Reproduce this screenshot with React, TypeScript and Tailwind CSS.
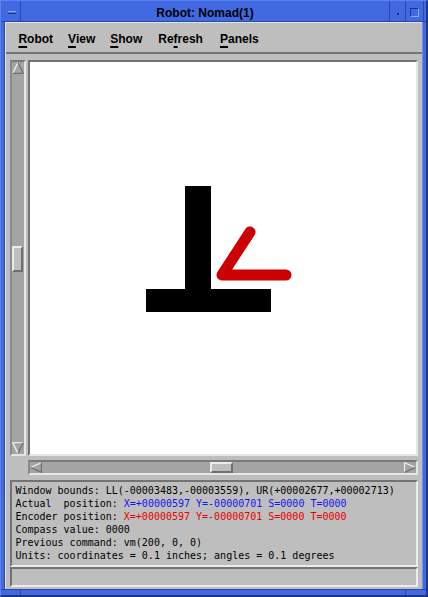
import React from "react";

const BG = "bg-[#bebebe]";

function UpArrow() {
  return (
    <svg width="12" height="12" viewBox="0 0 12 12" className="block">
      <polygon points="6,1 0.5,11.5 11.5,11.5" fill="#a4a4a4" />
      <line x1="6" y1="0.5" x2="0.7" y2="11.3" stroke="#ececec" strokeWidth="1.4" />
      <line x1="6" y1="0.5" x2="11.3" y2="11.3" stroke="#6e6e6e" strokeWidth="1.2" />
      <line x1="0.5" y1="11.4" x2="11.5" y2="11.4" stroke="#6e6e6e" strokeWidth="1.2" />
    </svg>
  );
}
function DownArrow() {
  return (
    <svg width="12" height="12" viewBox="0 0 12 12" className="block">
      <polygon points="0.5,0.5 11.5,0.5 6,11" fill="#a4a4a4" />
      <line x1="0.5" y1="0.6" x2="11.5" y2="0.6" stroke="#ececec" strokeWidth="1.2" />
      <line x1="0.7" y1="0.6" x2="6" y2="11.5" stroke="#ececec" strokeWidth="1.4" />
      <line x1="11.3" y1="0.6" x2="6" y2="11.5" stroke="#6e6e6e" strokeWidth="1.2" />
    </svg>
  );
}
function LeftArrow() {
  return (
    <svg width="12" height="11" viewBox="0 0 12 11" className="block">
      <polygon points="0.5,5.5 11.5,0.5 11.5,10.5" fill="#a4a4a4" />
      <line x1="0.5" y1="5.5" x2="11.5" y2="0.6" stroke="#ececec" strokeWidth="1.3" />
      <line x1="0.5" y1="5.5" x2="11.5" y2="10.4" stroke="#6e6e6e" strokeWidth="1.2" />
      <line x1="11.4" y1="0.5" x2="11.4" y2="10.5" stroke="#6e6e6e" strokeWidth="1.2" />
    </svg>
  );
}
function RightArrow() {
  return (
    <svg width="12" height="11" viewBox="0 0 12 11" className="block">
      <polygon points="0.5,0.5 11.5,5.5 0.5,10.5" fill="#a4a4a4" />
      <line x1="0.6" y1="0.5" x2="0.6" y2="10.5" stroke="#ececec" strokeWidth="1.2" />
      <line x1="0.5" y1="0.6" x2="11.5" y2="5.5" stroke="#ececec" strokeWidth="1.3" />
      <line x1="0.5" y1="10.4" x2="11.5" y2="5.5" stroke="#6e6e6e" strokeWidth="1.2" />
    </svg>
  );
}

function MenuItem({ first, rest, pre, cls }: { first: string; rest: string; pre?: string; cls?: string }) {
  return (
    <span className={`whitespace-pre ${cls ?? ""}`}>
      {pre}
      <span className="underline decoration-2 underline-offset-[3px]">{first}</span>
      {rest}
    </span>
  );
}

export default function App() {
  const mono = { fontFamily: '"DejaVu Sans Mono", "Liberation Mono", monospace' };
  return (
    <div
      className="w-[428px] h-[597px] bg-[#4169e1] border-t border-l border-t-[#5f82f0] border-l-[#5f82f0] border-r-2 border-b-2 border-r-[#22367e] border-b-[#22367e] flex flex-col overflow-hidden"
      style={{ fontFamily: '"Liberation Sans", Arial, sans-serif' }}
    >
      {/* Title bar */}
      <div className="h-[21px] flex border-b border-b-[#2b47a8]">
        <div className="w-[20px] border-r border-r-[#2b47a8] flex items-center justify-end pr-[4px] pt-[2px]">
          <div className="w-[8px] h-[3px] border-t border-t-[#8ea6ff] border-b border-b-[#1f3480] bg-[#4a72ea]" />
        </div>
        <div className="flex-1 flex items-center justify-center text-[12px] font-bold text-black pt-[3px]">
          Robot: Nomad(1)
        </div>
        <div className="w-[16px] border-l border-l-[#2b47a8] flex items-center justify-center pt-[5px]">
          <div className="w-[2px] h-[2px] bg-[#1f3480]" />
        </div>
        <div className="w-[18px] border-l border-l-[#2b47a8] flex items-center justify-center pt-[2px]">
          <div className="w-[9px] h-[9px] border border-t-[#1f3480] border-l-[#1f3480] border-r-[#8ea6ff] border-b-[#8ea6ff]" />
        </div>
        <div className="w-[3px] border-l border-l-[#2b47a8]" />
      </div>

      {/* Middle */}
      <div className="flex h-[567px]">
        <div className="w-[5px] border-r border-r-[#2b47a8]" />
        <div className={`flex-1 ${BG} border-t border-l border-t-[#e4e4e4] border-l-[#e4e4e4] flex flex-col`}>
          {/* menu bar */}
          <div className="h-[31px] border-b-2 border-b-[#737373] flex items-center gap-[15px] pl-[12px] text-[12px] font-bold text-black pt-[3px]">
            <MenuItem first="R" rest="obot" />
            <MenuItem first="V" rest="iew" />
            <MenuItem first="S" rest="how" />
            <MenuItem pre="Re" first="f" rest="resh" cls="ml-[1px]" />
            <MenuItem first="P" rest="anels" cls="ml-[2px]" />
          </div>

          <div className="flex flex-col pt-[6px] px-[4px]">
            <div className="flex gap-[2px] h-[396px]">
              {/* vertical scrollbar */}
              <div className="w-[16px] h-full bg-[#a4a4a4] border-2 border-t-[#7a7a7a] border-l-[#8a8a8a] border-r-[#e6e6e6] border-b-[#e6e6e6] flex flex-col">
                <UpArrow />
                <div className="flex-1 pt-[172px]">
                  <div className={`w-[11px] h-[26px] ${BG} border-2 border-t-[#ececec] border-l-[#ececec] border-r-[#6e6e6e] border-b-[#6e6e6e]`} />
                </div>
                <DownArrow />
              </div>
              {/* canvas */}
              <div className="flex-1 bg-white border-2 border-t-[#737373] border-l-[#737373] border-r-[#e6e6e6] border-b-[#e6e6e6]">
                <svg width="386" height="392" viewBox="0 0 386 392" className="block">
                  <rect x="155" y="124" width="26" height="104" fill="#000" />
                  <rect x="116" y="227" width="125" height="23" fill="#000" />
                  <polyline
                    points="220,170 192,213 256,213"
                    fill="none"
                    stroke="#cc0000"
                    strokeWidth="11"
                    strokeLinecap="round"
                    strokeLinejoin="round"
                  />
                </svg>
              </div>
            </div>

            {/* horizontal scrollbar */}
            <div className="mt-[4px] ml-[18px] h-[15px] bg-[#a4a4a4] border-2 border-t-[#7a7a7a] border-l-[#8a8a8a] border-r-[#e6e6e6] border-b-[#e6e6e6] flex items-center">
              <LeftArrow />
              <div className="flex-1 pl-[168px] flex items-center">
                <div className={`w-[23px] h-[11px] ${BG} border-2 border-t-[#ececec] border-l-[#ececec] border-r-[#6e6e6e] border-b-[#6e6e6e]`} />
              </div>
              <RightArrow />
            </div>

            {/* info panel */}
            <div
              className="mt-[5px] h-[87px] border-2 border-t-[#737373] border-l-[#737373] border-r-[#ececec] border-b-[#ececec] pl-[3px] pt-[2px] text-[10px] leading-[13px] text-black"
              style={mono}
            >
              <div className="whitespace-pre">Window bounds: LL(-00003483,-00003559), UR(+00002677,+00002713)</div>
              <div className="whitespace-pre">
                Actual  position: <span className="text-[#1414f0]">X=+00000597 Y=-00000701 S=0000 T=0000</span>
              </div>
              <div className="whitespace-pre">
                Encoder position: <span className="text-[#e60000]">X=+00000597 Y=-00000701 S=0000 T=0000</span>
              </div>
              <div className="whitespace-pre">Compass value: 0000</div>
              <div className="whitespace-pre">Previous command: vm(200, 0, 0)</div>
              <div className="whitespace-pre">Units: coordinates = 0.1 inches; angles = 0.1 degrees</div>
            </div>

            {/* status */}
            <div className="h-[20px] border-2 border-t-[#737373] border-l-[#737373] border-r-[#ececec] border-b-[#ececec]" />
          </div>
        </div>
        <div className="w-[4px] border-l border-l-[#6f8ef5]" />
      </div>

      {/* bottom frame */}
      <div className="h-[6px] flex border-t border-t-[#2b47a8]">
        <div className="w-[20px] border-r border-r-[#2b47a8]" />
        <div className="flex-1" />
        <div className="w-[21px] border-l border-l-[#2b47a8]" />
      </div>
    </div>
  );
}
